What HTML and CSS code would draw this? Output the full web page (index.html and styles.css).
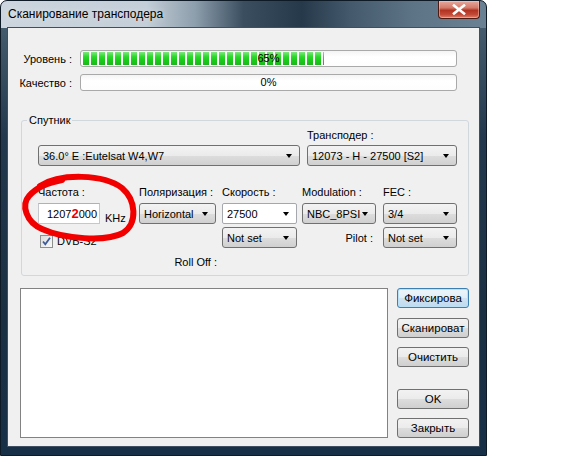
FILE: index.html
```html
<!DOCTYPE html>
<html>
<head>
<meta charset="utf-8">
<link rel="stylesheet" href="styles.css">
</head>
<body>
<div class="window">
  <div class="titlebar">
    <span class="title">Сканирование трансподера</span>
    <div class="close"><svg width="14" height="11" viewBox="0 0 14 11"><path d="M2 1.5 L12 9.5 M12 1.5 L2 9.5" stroke="#fff" stroke-width="2.6" stroke-linecap="square"/></svg></div>
  </div>
  <div class="client">
    <div class="meters">
      <div class="meter-row">
        <span class="mlabel">Уровень :</span>
        <div class="bar"><div class="fill" style="width:65%"></div><span class="pct">65%</span></div>
      </div>
      <div class="meter-row">
        <span class="mlabel">Качество :</span>
        <div class="bar"><div class="fill" style="width:0%"></div><span class="pct">0%</span></div>
      </div>
    </div>

    <fieldset class="group">
      <legend>Спутник</legend>
      <div class="row-a">
        <div class="combo sat"><span>36.0° E :Eutelsat W4,W7</span><i class="arrow"></i></div>
        <div class="tp-col">
          <div class="lbl">Трансподер :</div>
          <div class="combo tp"><span>12073 - H - 27500 [S2]</span><i class="arrow"></i></div>
        </div>
      </div>
      <div class="params">
        <div class="lbl">Частота :</div>
        <div class="lbl">Поляризация :</div>
        <div class="lbl">Скорость :</div>
        <div class="lbl">Modulation :</div>
        <div class="lbl">FEC :</div>

        <div class="freq-cell">
          <div class="textbox">1207<span class="red2">2</span>000</div>
          <span class="unit">KHz</span>
        </div>
        <div class="combo w77"><span>Horizontal</span><i class="arrow"></i></div>
        <div class="combo edit w75"><span>27500</span><i class="arrow"></i></div>
        <div class="combo w74"><span>NBC_8PSI</span><i class="arrow"></i></div>
        <div class="combo w74"><span>3/4</span><i class="arrow"></i></div>

        <div class="check-cell"><span class="checkbox"><svg width="11" height="11" viewBox="0 0 11 11"><path d="M2 5.5 L4.3 8.3 L9 1.8" stroke="#3d5a99" stroke-width="1.8" fill="none"/></svg></span><span class="check-text">DVB-S2</span></div>
        <div class="empty"></div>
        <div class="combo w75"><span>Not set</span><i class="arrow"></i></div>
        <div class="lbl right pilot">Pilot :</div>
        <div class="combo w74"><span>Not set</span><i class="arrow"></i></div>

        <div class="empty"></div>
        <div class="lbl right rolloff">Roll Off :</div>
      </div>
    </fieldset>

    <div class="bottom">
      <div class="log"></div>
      <div class="buttons">
        <div class="btn default">Фиксирова</div>
        <div class="btn b2">Сканироват</div>
        <div class="btn b3">Очистить</div>
        <div class="btn b4">OK</div>
        <div class="btn b5">Закрыть</div>
      </div>
    </div>
  </div>
  <svg class="scribble" width="487" height="456" viewBox="0 0 487 456">
    <path d="M40 186 C 60 173, 104 174, 122 188 C 136 200, 138 223, 123 233 C 106 242, 64 239, 42 229 C 26 222, 21 205, 29 196 C 35 189, 46 183, 62 180" stroke="#f20000" stroke-width="6" fill="none" stroke-linecap="round"/>
  </svg>
</div>
</body>
</html>
```
FILE: styles.css
```css
* { box-sizing: border-box; }

body {
  margin: 0;
  background: #fff;
  font-family: "Liberation Sans", Arial, sans-serif;
  font-size: 11px;
  color: #000;
}

.window {
  position: relative;
  width: 487px;
  height: 456px;
  border: 1px solid #0e1b27;
  border-radius: 7px 7px 0 0;
  padding: 0 6px 8px 6px;
  display: flex;
  flex-direction: column;
  background:
    linear-gradient(90deg, #cdd6de 0%, #c3ced8 30%, #8d9eac 40%, #3a4e60 50%, #26394b 62%, #44596c 72%, #5d7386 85%, #6a8193 100%) top / 100% 27px no-repeat,
    linear-gradient(180deg, #4c6476 0%, #22384c 30%, #1a2f42 70%, #173047 100%);
}

.titlebar {
  height: 26px;
  display: flex;
  justify-content: space-between;
  align-items: flex-start;
}

.title {
  font-size: 12px;
  padding: 6px 0 0 1px;
  color: #000;
  text-shadow: 0 0 6px rgba(255,255,255,0.6);
}

.close {
  width: 42px;
  height: 18px;
  border: 1px solid #4d1b14;
  border-top: none;
  border-radius: 0 0 4px 4px;
  background: linear-gradient(180deg, #e7aa9d 0%, #d47a69 40%, #b23322 55%, #c24a36 80%, #e0806b 100%);
  display: flex;
  align-items: center;
  justify-content: center;
  box-shadow: inset 0 0 0 1px rgba(255,210,200,0.45);
}

.client {
  flex: 1;
  background: #f0f0f0;
  border: 1px solid #3d4f60;
  display: flex;
  flex-direction: column;
}

.meters {
  margin-top: 22px;
  display: flex;
  flex-direction: column;
  gap: 7px;
}

.meter-row {
  display: flex;
  align-items: center;
  gap: 8px;
}

.mlabel {
  width: 64px;
  text-align: right;
}

.bar {
  width: 377px;
  height: 17px;
  border: 1px solid #a9a9a9;
  border-radius: 3px;
  background: linear-gradient(180deg, #f4f4f4, #ffffff 40%, #fdfdfd);
  display: grid;
  padding: 1px 2px;
}

.fill, .pct { grid-area: 1 / 1; }

.fill {
  height: 13px;
  align-self: center;
  background:
    repeating-linear-gradient(90deg, transparent 0 6px, #fbfbfb 6px 8px),
    linear-gradient(180deg, #7ee87e 0%, #2fd82f 35%, #19cc19 65%, #1fb51f 100%);
}

.pct {
  justify-self: center;
  align-self: center;
  line-height: 13px;
}

.group {
  margin: 22px 0 0 13px;
  width: 448px;
  border: 1px solid #d0d8de;
  border-radius: 3px;
  padding: 1px 0 8px 16px;
}

.group legend {
  padding: 0 2px;
  margin-left: -11px;
  line-height: 14px;
}

.lbl { line-height: 14px; white-space: nowrap; }
.right { text-align: right; }

.row-a {
  display: flex;
  align-items: flex-end;
  gap: 7px;
}

.tp-col {
  display: flex;
  flex-direction: column;
  gap: 3px;
}

.combo {
  height: 21px;
  border: 1px solid #707070;
  border-radius: 3px;
  background: linear-gradient(180deg, #f3f3f3 0%, #ebebeb 50%, #dddddd 51%, #d0d0d0 100%);
  display: flex;
  align-items: center;
  justify-content: space-between;
  padding: 0 7px 0 4px;
  white-space: nowrap;
  overflow: hidden;
}

.combo.edit {
  background: #fff;
  border-color: #a4a8ae;
  border-radius: 2px;
}

.arrow {
  width: 0;
  height: 0;
  border-left: 3.5px solid transparent;
  border-right: 3.5px solid transparent;
  border-top: 4px solid #000;
  flex: none;
}

.sat { width: 262px; }
.tp { width: 150px; }
.w77 { width: 77px; }
.w75 { width: 75px; }
.w74 { width: 74px; }

.params {
  margin-top: 19px;
  display: grid;
  grid-template-columns: 101px 83px 80px 81px 74px;
  grid-template-rows: 14px 21px 21px 14px;
  row-gap: 4px;
}

.params > .check-cell,
.params > .check-cell ~ * { margin-top: -1px; }

.params > .rolloff,
.params > .check-cell ~ .empty:nth-last-child(2) { margin-top: 2px; }

.pilot { padding-right: 10px; align-self: center; }
.rolloff { padding-right: 5px; }

.freq-cell {
  display: flex;
  align-items: flex-end;
  gap: 5px;
}

.textbox {
  width: 62px;
  height: 21px;
  border: 1px solid #c4c8ce;
  border-top-color: #aeb2b8;
  background: #fff;
  text-align: right;
  padding: 4px 2px 0 0;
  line-height: 13px;
  white-space: nowrap;
}

.red2 {
  color: #e80000;
  font-weight: bold;
  font-size: 13px;
  line-height: 10px;
}

.unit { line-height: 13px; margin-bottom: -1px; }

.check-cell {
  display: flex;
  align-items: center;
  gap: 4px;
  padding: 6px 0 0 2px;
}

.checkbox {
  width: 13px;
  height: 13px;
  border: 1px solid #8e8f8f;
  background: linear-gradient(135deg, #dcdcdc, #fafafa);
  display: flex;
  align-items: center;
  justify-content: center;
}

.bottom {
  margin: 12px 0 0 12px;
  display: flex;
  align-items: flex-start;
  gap: 9px;
}

.log {
  width: 368px;
  height: 150px;
  border: 1px solid #828282;
  background: #fff;
}

.buttons {
  display: flex;
  flex-direction: column;
}

.btn {
  width: 72px;
  height: 20px;
  border: 1px solid #707070;
  border-radius: 3px;
  background: linear-gradient(180deg, #f2f2f2 0%, #ebebeb 50%, #dddddd 51%, #cfcfcf 100%);
  display: flex;
  align-items: center;
  justify-content: center;
  white-space: nowrap;
  overflow: hidden;
  font-size: 11.5px;
}

.btn.default {
  border-color: #3c7fb1;
  background: linear-gradient(180deg, #eef5fa 0%, #e0eef8 50%, #cfe3f2 51%, #c0daee 100%);
  box-shadow: inset 0 0 0 1px #b8e0f7;
}

.b2 { margin-top: 10px; }
.b3 { margin-top: 9px; }
.b4 { margin-top: 22px; }
.b5 { margin-top: 9px; }

.scribble {
  position: absolute;
  left: -1px;
  top: -1px;
  pointer-events: none;
}
```
